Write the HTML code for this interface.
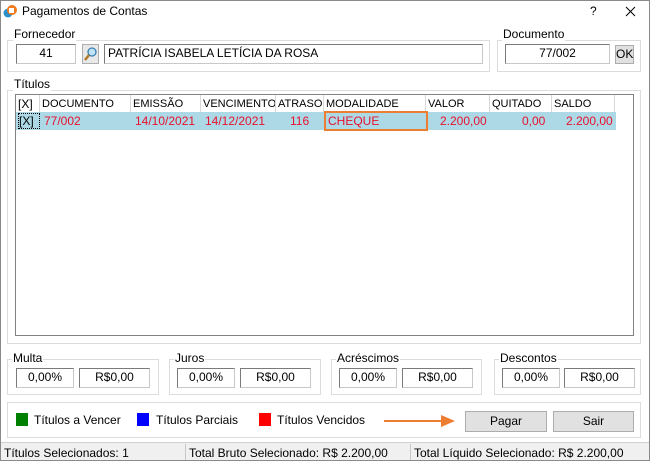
<!DOCTYPE html>
<html><head><meta charset="utf-8"><style>
*{box-sizing:border-box;margin:0;padding:0}
body{width:650px;height:461px;overflow:hidden;background:#fff;font-family:"Liberation Sans",sans-serif;font-size:12px;color:#000;position:relative}
.a{position:absolute}
.win{left:0;top:0;width:650px;height:461px;border:1px solid #8a8a8a}
.grp{position:absolute;border:1px solid #dcdcdc}
.lbl{position:absolute;background:#fff;padding:0 1px;font-size:12px;line-height:13px}
.inp{position:absolute;border:1px solid #7a7a7a;border-right-color:#c8c8c8;border-bottom-color:#c8c8c8;background:#fff;font-size:12px;line-height:17px;text-align:center}
.btn{position:absolute;border:1px solid #adadad;background:#e1e1e1;text-align:center;font-size:12px}
.th{position:absolute;top:95px;height:17px;line-height:18px;font-size:11px;border-right:1px solid #d8d8d8;padding-left:2px;background:#fff;overflow:hidden;white-space:nowrap}
.td{position:absolute;top:112px;height:18px;line-height:19px;color:#e8112d;font-size:12px;background:#add8e6}
</style></head><body>
<div class="a win"></div>
<svg class="a" style="left:3px;top:4px" width="14" height="14"><circle cx="5" cy="9" r="4.5" fill="#2b8fc9"/><circle cx="9" cy="6" r="5" fill="#f07a1c"/><rect x="6" y="4" width="5" height="5" fill="#fff"/></svg>
<div class="a" style="left:22px;top:4px;font-size:12px">Pagamentos de Contas</div>
<div class="a" style="left:590px;top:4px;font-size:12px">?</div>
<svg class="a" style="left:625px;top:6px" width="11" height="11"><path d="M1 1L10 10M10 1L1 10" stroke="#000" stroke-width="1"/></svg>

<div class="grp" style="left:7px;top:40px;width:483px;height:32px"></div>
<div class="lbl" style="left:13px;top:28px">Fornecedor</div>
<div class="inp" style="left:16px;top:44px;width:60px;height:20px">41</div>
<div class="btn" style="left:82px;top:44px;width:17px;height:20px;background:#e8e8e8"><svg width="15" height="18"><circle cx="9" cy="7" r="4" fill="#bfe3f7" stroke="#3a7fb0" stroke-width="1.3"/><line x1="6" y1="10" x2="2" y2="15" stroke="#b07a2a" stroke-width="2.5"/></svg></div>
<div class="inp" style="left:104px;top:44px;width:379px;height:20px;text-align:left;padding-left:3px">PATRÍCIA ISABELA LETÍCIA DA ROSA</div>

<div class="grp" style="left:497px;top:40px;width:144px;height:32px"></div>
<div class="lbl" style="left:502px;top:28px">Documento</div>
<div class="inp" style="left:505px;top:44px;width:105px;height:20px">77/002</div>
<div class="btn" style="left:615px;top:45px;width:19px;height:19px;line-height:17px">OK</div>

<div class="grp" style="left:7px;top:90px;width:634px;height:254px"></div>
<div class="lbl" style="left:13px;top:78px">Títulos</div>
<div class="a" style="left:15px;top:94px;width:619px;height:242px;border:1px solid #828282;background:#fff"></div>
<div class="th" style="left:16px;width:24px;font-size:12px">[X]</div>
<div class="th" style="left:40px;width:91px">DOCUMENTO</div>
<div class="th" style="left:131px;width:70px">EMISSÃO</div>
<div class="th" style="left:201px;width:75px">VENCIMENTO</div>
<div class="th" style="left:276px;width:48px">ATRASO</div>
<div class="th" style="left:324px;width:102px">MODALIDADE</div>
<div class="th" style="left:426px;width:64px">VALOR</div>
<div class="th" style="left:490px;width:62px">QUITADO</div>
<div class="th" style="left:552px;width:63px">SALDO</div>
<div class="td" style="left:16px;width:600px"></div>
<div class="a" style="left:18px;top:113px;width:22px;height:16px;border:1px dotted #000;line-height:15px;font-size:12px">[X]</div>
<div class="td" style="left:44px">77/002</div>
<div class="td" style="left:135px">14/10/2021</div>
<div class="td" style="left:205px">14/12/2021</div>
<div class="td" style="left:290px">116</div>
<div class="a" style="left:324px;top:111px;width:104px;height:20px;border:2px solid #ed7d31;background:#add8e6;color:#e8112d;line-height:17px;padding-left:2px">CHEQUE</div>
<div class="td" style="left:440px">2.200,00</div>
<div class="td" style="left:522px">0,00</div>
<div class="td" style="left:566px">2.200,00</div>

<div class="grp" style="left:7px;top:359px;width:152px;height:36px"></div>
<div class="lbl" style="left:12px;top:352px">Multa</div>
<div class="inp" style="left:16px;top:368px;width:58px;height:20px">0,00%</div>
<div class="inp" style="left:79px;top:368px;width:71px;height:20px">R$0,00</div>
<div class="grp" style="left:169px;top:359px;width:152px;height:36px"></div>
<div class="lbl" style="left:174px;top:352px">Juros</div>
<div class="inp" style="left:177px;top:368px;width:58px;height:20px">0,00%</div>
<div class="inp" style="left:240px;top:368px;width:71px;height:20px">R$0,00</div>
<div class="grp" style="left:331px;top:359px;width:151px;height:36px"></div>
<div class="lbl" style="left:336px;top:352px">Acréscimos</div>
<div class="inp" style="left:339px;top:368px;width:58px;height:20px">0,00%</div>
<div class="inp" style="left:402px;top:368px;width:71px;height:20px">R$0,00</div>
<div class="grp" style="left:494px;top:359px;width:147px;height:36px"></div>
<div class="lbl" style="left:499px;top:352px">Descontos</div>
<div class="inp" style="left:502px;top:368px;width:58px;height:20px">0,00%</div>
<div class="inp" style="left:564px;top:368px;width:71px;height:20px">R$0,00</div>

<div class="grp" style="left:7px;top:402px;width:634px;height:36px"></div>
<div class="a" style="left:16px;top:413px;width:12px;height:13px;background:#008000"></div>
<div class="a" style="left:34px;top:413px">Títulos a Vencer</div>
<div class="a" style="left:137px;top:413px;width:12px;height:13px;background:#0000ff"></div>
<div class="a" style="left:156px;top:413px">Títulos Parciais</div>
<div class="a" style="left:259px;top:413px;width:12px;height:13px;background:#ff0000"></div>
<div class="a" style="left:277px;top:413px">Títulos Vencidos</div>
<svg class="a" style="left:383px;top:414px" width="74" height="14"><line x1="1" y1="7" x2="62" y2="7" stroke="#ed7d31" stroke-width="2"/><polygon points="58,1 72,7 58,13" fill="#ed7d31"/></svg>
<div class="btn" style="left:465px;top:411px;width:82px;height:21px;line-height:19px">Pagar</div>
<div class="btn" style="left:553px;top:411px;width:81px;height:21px;line-height:19px">Sair</div>

<div class="a" style="left:1px;top:442px;width:648px;height:18px;background:#f0f0f0;border-top:1px solid #d0d0d0"></div>
<div class="a" style="left:185px;top:444px;width:1px;height:16px;background:#c8c8c8"></div>
<div class="a" style="left:410px;top:444px;width:1px;height:16px;background:#c8c8c8"></div>
<div class="a" style="left:4px;top:446px">Títulos Selecionados: 1</div>
<div class="a" style="left:189px;top:446px">Total Bruto Selecionado: R$ 2.200,00</div>
<div class="a" style="left:414px;top:446px">Total Líquido Selecionado: R$ 2.200,00</div>
</body></html>
